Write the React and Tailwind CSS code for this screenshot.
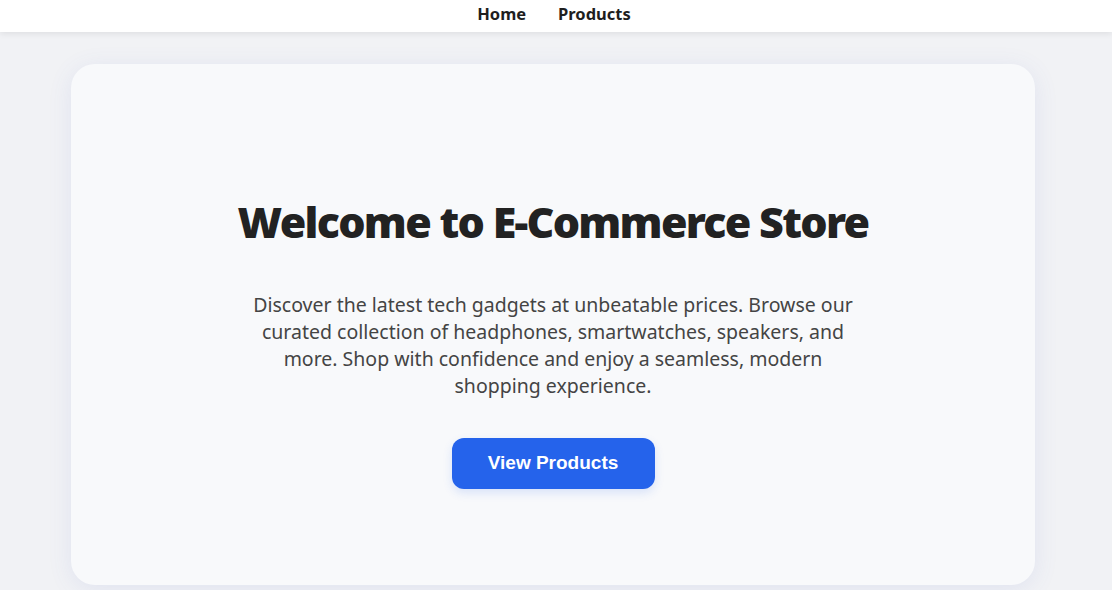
import React from 'react';

const App = () => {
  return (
    <div className="min-h-screen bg-[#f1f2f5] font-['Noto_Sans',sans-serif]">
      <header className="h-8 pb-1 pr-1 bg-white shadow-[0_2px_6px_rgba(0,0,0,0.08)] flex items-center justify-center gap-8 relative z-10">
        <a href="#" className="text-[16.5px] font-bold text-[#1e1e1e]">Home</a>
        <a href="#" className="text-[16.5px] font-bold text-[#1e1e1e]">Products</a>
      </header>

      <main className="pl-[71px] pt-8 pb-1">
        <section className="w-[964px] h-[521px] bg-[#f8f9fb] rounded-3xl shadow-[0_4px_24px_rgba(80,100,200,0.10)] flex flex-col items-center pt-[130px]">
          <h1 className="text-[43px] leading-[55px] font-black tracking-[-0.04em] text-[#222]">
            Welcome to E-Commerce Store
          </h1>
          <p className="mt-[42px] max-w-[620px] text-center text-[19.5px] leading-[27px] text-[#444]">
            Discover the latest tech gadgets at unbeatable prices. Browse our curated collection of headphones, smartwatches, speakers, and more. Shop with confidence and enjoy a seamless, modern shopping experience.
          </p>
          <button className="mt-[39px] w-[203px] h-[51px] rounded-xl bg-[#2563eb] text-white text-[19px] font-bold font-['Liberation_Sans',Arial,sans-serif] shadow-[0_4px_10px_rgba(37,99,235,0.15)]">
            View Products
          </button>
        </section>
      </main>
    </div>
  );
};

export default App;
